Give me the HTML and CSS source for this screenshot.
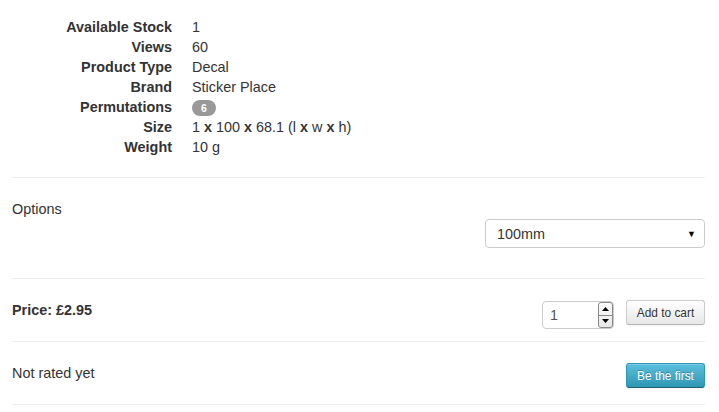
FILE: index.html
```
<!DOCTYPE html>
<html>
<head>
<meta charset="utf-8">
<link rel="stylesheet" href="styles.css">
</head>
<body>
<div class="page">
  <dl class="specs">
    <dt>Available Stock</dt><dd>1</dd>
    <dt>Views</dt><dd>60</dd>
    <dt>Product Type</dt><dd>Decal</dd>
    <dt>Brand</dt><dd>Sticker Place</dd>
    <dt>Permutations</dt><dd><span class="badge">6</span></dd>
    <dt>Size</dt><dd>1 <b>x</b> 100 <b>x</b> 68.1 (l <b>x</b> w <b>x</b> h)</dd>
    <dt>Weight</dt><dd>10 g</dd>
  </dl>
  <hr class="rule rule-first">
  <div class="section options">
    <div class="label">Options</div>
    <div class="select-row">
      <div class="select"><span>100mm</span><span class="caret">▼</span></div>
    </div>
  </div>
  <hr class="rule">
  <div class="section row">
    <div class="price">Price: £2.95</div>
    <div class="cart">
      <div class="qty">
        <span class="qty-val">1</span>
        <span class="spin">
          <span class="spin-btn"><svg width="7" height="4" viewBox="0 0 7 4"><path d="M0 4 L3.5 0 L7 4 Z" fill="#000"/></svg></span>
          <span class="spin-btn spin-down"><svg width="7" height="4" viewBox="0 0 7 4"><path d="M0 0 L3.5 4 L7 0 Z" fill="#000"/></svg></span>
        </span>
      </div>
      <button class="btn">Add to cart</button>
    </div>
  </div>
  <hr class="rule">
  <div class="section row">
    <div class="rated">Not rated yet</div>
    <button class="btn btn-info">Be the first</button>
  </div>
  <hr class="rule">
</div>
</body>
</html>
```
FILE: styles.css
```
* { box-sizing: border-box; }
body {
  margin: 0;
  font-family: "Liberation Sans", Arial, sans-serif;
  font-size: 14.4px;
  line-height: 20px;
  color: #333;
  background: #fff;
}
.page {
  padding: 17px 14px 0 12px;
}
.specs {
  margin: 0;
  display: grid;
  grid-template-columns: 160px 1fr;
  column-gap: 20px;
}
.specs dt {
  font-weight: bold;
  text-align: right;
  white-space: nowrap;
}
.specs dd {
  margin: 0;
}
.badge {
  display: inline-block;
  background: #999;
  color: #fff;
  font-size: 10.5px;
  font-weight: bold;
  line-height: 14px;
  padding: 1px 9px;
  border-radius: 9px;
  vertical-align: baseline;
}
.rule {
  margin: 0;
  border: 0;
  border-top: 1px solid #eee;
  height: 0;
}
.rule-first {
  margin-top: 20px;
}
.section {
  padding-top: 21px;
}
.options {
  padding-bottom: 30px;
}
.select-row {
  display: flex;
  justify-content: flex-end;
}
.select {
  width: 220px;
  height: 29px;
  border: 1px solid #ccc;
  border-radius: 4px;
  display: flex;
  align-items: center;
  justify-content: space-between;
  padding: 0 8px 0 11px;
  color: #333;
}
.caret {
  font-size: 9px;
  color: #000;
}
.row {
  display: flex;
  justify-content: space-between;
  align-items: flex-start;
  height: 62px;
}
.price {
  font-weight: bold;
}
.cart {
  display: flex;
  align-items: flex-start;
  gap: 12px;
}
.qty {
  margin-top: 1px;
  width: 72px;
  height: 28px;
  border: 1px solid #ccc;
  border-radius: 4px;
  display: flex;
  align-items: center;
  justify-content: space-between;
  padding: 0 0 0 7px;
  color: #555;
}
.spin {
  display: flex;
  flex-direction: column;
  height: 26px;
  width: 15px;
  border: 1px solid #888;
  border-radius: 3px;
  background: linear-gradient(#fcfcfc, #e8e8e8);
  overflow: hidden;
}
.spin-btn {
  flex: 1;
  display: flex;
  align-items: center;
  justify-content: center;
}
.spin-down {
  border-top: 1px solid #888;
}
.btn {
  font-family: "Liberation Sans", Arial, sans-serif;
  font-size: 11.9px;
  line-height: 16px;
  padding: 3px 0;
  width: 79px;
  height: 25px;
  white-space: nowrap;
  text-align: center;
  color: #333;
  border: 1px solid #ccc;
  border-bottom-color: #b3b3b3;
  border-radius: 3px;
  background: linear-gradient(#ffffff, #e6e6e6);
  box-shadow: inset 0 1px 0 rgba(255,255,255,.2), 0 1px 2px rgba(0,0,0,.05);
  text-shadow: 0 1px 1px rgba(255,255,255,.75);
  cursor: pointer;
}
.btn-info {
  color: #fff;
  text-shadow: 0 -1px 0 rgba(0,0,0,.25);
  background: linear-gradient(#5bc0de, #2f96b4);
  border-color: #2f96b4 #2f96b4 #1f6377;
}
```
